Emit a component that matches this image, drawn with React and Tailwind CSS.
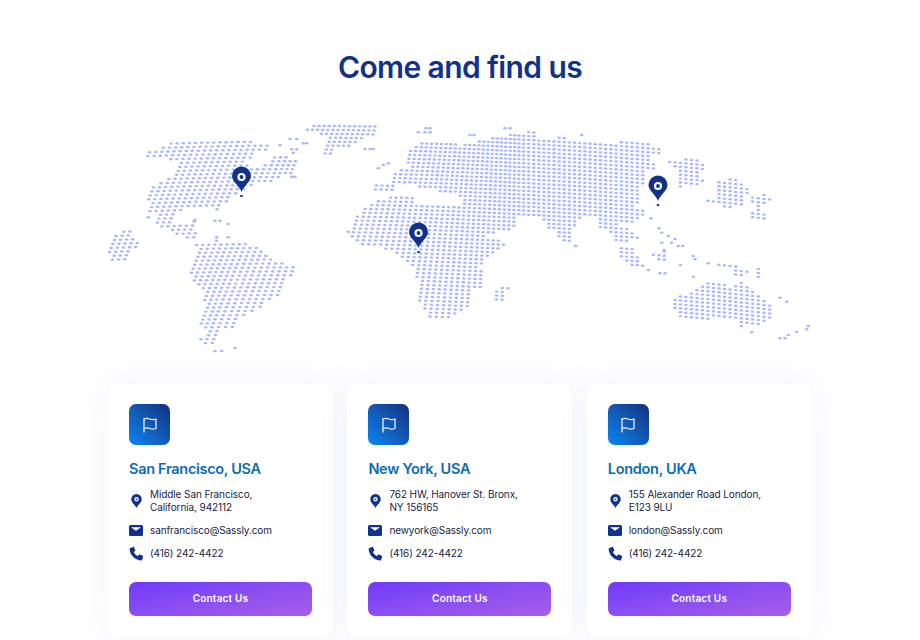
import { Fragment } from 'react'

// land outlines, traced from the picture. L = left half crop, R = right half crop
const L = (pts) => pts.map(([x, y]) => [100 + x / 3, 120 + y / 3])
const R = (pts) => pts.map(([x, y]) => [460 + x / 3, 120 + y / 3])

const land = [
  L([[128,120],[150,95],[215,65],[330,62],[400,62],[445,55],[465,58],[468,70],[520,65],[505,90],[462,100],[445,125],[460,140],[480,150],[520,110],[550,105],[580,115],[600,140],[585,155],[530,180],[470,195],[430,215],[395,235],[355,262],[350,275],[335,265],[250,270],[225,290],[215,310],[260,312],[285,300],[290,335],[280,365],[260,355],[225,340],[185,325],[160,312],[165,280],[140,272],[150,210],[175,185],[215,165],[235,125],[180,108],[130,122]]),
  L([[605,35],[640,13],[830,13],[830,38],[780,65],[750,80],[700,85],[690,105],[665,100],[668,75],[680,50],[640,38]]),
  L([[27,405],[38,342],[90,330],[115,365],[85,425],[30,428]]),
  L([[280,372],[350,360],[440,372],[490,385],[500,410],[530,425],[590,440],[590,462],[560,475],[545,500],[545,530],[490,550],[470,575],[420,595],[400,625],[360,620],[345,665],[365,662],[330,680],[300,660],[320,625],[295,620],[310,560],[320,510],[280,490],[265,445],[285,405],[300,385]]),
  [[405,153],[422,142],[450,142],[460,145],[478,142],[487,138],[498,138],[510,135],[520,132],[535,132],[535,137],[567,138],[575,142],[642,142],[657,146],[665,153],[650,155],[650,162],[660,167],[647,170],[643,185],[637,192],[643,198],[635,207],[645,208],[643,217],[633,222],[610,222],[627,228],[640,238],[627,242],[615,243],[610,230],[598,227],[597,218],[580,218],[575,227],[570,243],[562,242],[555,232],[548,227],[540,218],[517,217],[517,227],[503,232],[483,235],[505,242],[502,248],[493,255],[483,262],[478,267],[485,277],[485,287],[470,292],[470,302],[465,310],[453,318],[428,318],[423,308],[417,295],[417,267],[408,263],[385,248],[360,248],[352,237],[355,218],[370,203],[387,197],[412,197],[417,205],[433,205],[460,207],[460,195],[445,194],[433,190],[420,188],[410,183],[395,185],[392,190],[373,192],[377,183],[390,182],[390,175],[400,168],[408,167]],
  R([[620,125],[700,115],[745,140],[705,165],[745,190],[650,205],[645,150]]),
  R([[770,175],[830,180],[865,200],[860,225],[855,250],[810,265],[730,240],[760,235],[770,200]]),
  R([[870,225],[910,222],[945,245],[890,260],[870,250]]),
  R([[880,270],[905,270],[935,292],[885,305],[870,285]]),
  R([[480,380],[515,385],[550,440],[525,445],[480,410]]),
  R([[575,405],[615,390],[630,420],[590,430]]),
  R([[645,420],[675,440],[650,445]]),
  R([[765,430],[790,428],[830,440],[790,440]]),
  R([[800,450],[860,450],[880,465],[820,465]]),
  R([[880,450],[895,440],[915,452],[900,475],[880,470]]),
  R([[630,540],[680,520],[725,490],[790,480],[800,505],[840,480],[870,510],[905,525],[950,575],[925,600],[900,620],[840,620],[825,595],[700,600],[655,598]]),
  R([[105,510],[140,490],[145,510],[130,545],[110,545]]),
]

// stray dots that no outline catches
const strays = [
  ...L([[540,75],[570,57],[590,57],[610,70],[620,70],[575,88],[590,88],[580,98],[795,87],[810,87],[820,87],[575,170],[585,170],[345,302],[360,302],[385,312],[350,352],[385,352],[285,300],[345,693],[365,693],[405,684],[955,37],[975,37],[990,37],[978,25],[990,25],[835,145],[865,130],[850,135],[745,335],[145,292]]),
  ...R([[565,450],[600,460],[615,460],[597,325],[605,338],[625,348],[645,357],[605,368],[635,368],[655,378],[668,378],[612,390],[700,408],[705,418],[700,470],[745,430],[347,378],[573,295],[960,533],[980,545],[1045,618],[1040,628],[1010,635],[985,645],[960,655],[975,655],[875,637],[135,25],[150,25],[30,45],[42,45],[365,45]]),
]

function inside(x, y, poly) {
  let hit = false
  for (let i = 0, j = poly.length - 1; i < poly.length; j = i++) {
    const [xi, yi] = poly[i]
    const [xj, yj] = poly[j]
    if (yi > y !== yj > y && x < ((xj - xi) * (y - yi)) / (yj - yi) + xi) hit = !hit
  }
  return hit
}

// the dot grid is warped: wide slanted columns on the left, tighter upright ones in Asia
const pitchAt = (x) => (x < 350 ? 6.1 : x < 520 ? 6.1 - ((x - 350) / 170) * 1.1 : 5 + ((x - 520) / 280) * 0.8)
const slantAt = (x) => (x < 250 ? 1.6 : x < 520 ? 1.6 * (1 - (x - 250) / 270) : 0)

const dots = []
for (let row = 0; row < 62; row++) {
  let base = 90
  while (base < 860) {
    const x = base - (row - 30) * slantAt(base)
    const y = 118 + row * 3.93 + 0.00012 * (x - 300) * (x - 300)
    if (land.some((p) => inside(x, y, p))) dots.push([x, y])
    base += pitchAt(base)
  }
}
dots.push(...strays)

const pins = [
  [241.5, 168],
  [418.5, 224],
  [658, 177],
]

function WorldMap() {
  return (
    <svg viewBox="105 120 710 240" width="710" height="240" className="block">
      {dots.map(([x, y], i) => (
        <ellipse key={i} cx={x.toFixed(1)} cy={y.toFixed(1)} rx="1.8" ry="1.2" fill="#aab7fa" />
      ))}
      {pins.map(([x, y]) => (
        <Fragment key={x}>
          <path
            d={`M${x} ${y + 24}c-1-3-3-5-5.500-8.200-2-2.500-4-4.800-4-7.800a9.500 9.500 0 0 1 19 0c0 3-2 5.300-4 7.800-2.500 3.200-4.500 5.200-5.500 8.200z`}
            fill="#12328a"
          />
          <circle cx={x} cy={y + 9} r="3" fill="none" stroke="#fff" strokeWidth="2.200" />
          <ellipse cx={x} cy={y + 28} rx="1.600" ry="1.100" fill="#12328a" />
        </Fragment>
      ))}
    </svg>
  )
}

function PinIcon() {
  return (
    <svg viewBox="0 0 12 16" className="w-[11px] h-[14px]">
      <path
        fillRule="evenodd"
        d="M6 16C5 13 0 10 0 6a6 6 0 0 1 12 0c0 4-5 7-6 10zM6 3.500a2.500 2.500 0 1 0 0 5 2.500 2.500 0 0 0 0-5z"
        fill="#12328a"
      />
      <circle cx="6" cy="6" r="1" fill="#12328a" />
    </svg>
  )
}

function MailIcon() {
  return (
    <svg viewBox="0 0 14 11" className="w-[14px] h-[11px]">
      <rect width="14" height="11" rx="1.500" fill="#12328a" />
      <path d="M2 2.200h10L7 5.800z" fill="#fff" />
    </svg>
  )
}

function PhoneIcon() {
  return (
    <svg viewBox="0 0 24 24" className="w-[15px] h-[15px]">
      <path
        d="M6.600 1.500 3 2.600C1.800 3 1 4 1 5.300 1.500 14.500 9.500 22.500 18.700 23c1.300 0 2.400-.8 2.700-2l1.100-3.600c.2-.7-.1-1.400-.7-1.700l-4.300-2c-.6-.3-1.300-.1-1.700.4l-1.700 2.100c-2.900-1.400-5.200-3.700-6.500-6.600l2.100-1.700c.5-.4.700-1.100.4-1.700l-2-4.300c-.3-.6-.9-.6-1.500-.4z"
        fill="#12328a"
      />
    </svg>
  )
}

function FlagIcon() {
  return (
    <svg viewBox="0 0 16 16" className="w-[16px] h-[16px]" fill="none" stroke="#e8f0ff" strokeWidth="1.300" strokeLinecap="round" strokeLinejoin="round">
      <path d="M2 15V2" />
      <path d="M2 2c2.200-1 4-.9 6 0s3.800.9 6 0v9.500c-2.200.9-4 .9-6 0s-3.800-.9-6 0" />
    </svg>
  )
}

const offices = [
  { city: 'San Francisco, USA', lines: ['Middle San Francisco,', 'California, 942112'], email: 'sanfrancisco@Sassly.com' },
  { city: 'New York, USA', lines: ['762 HW, Hanover St. Bronx,', 'NY 156165'], email: 'newyork@Sassly.com' },
  { city: 'London, UKA', lines: ['155 Alexander Road London,', 'E123 9LU'], email: 'london@Sassly.com' },
]

function OfficeCard({ office }) {
  return (
    <div className="w-[225px] h-[253px] rounded-[10px] bg-white px-[21px] pt-[20px] shadow-[0_0_40px_rgba(90,100,230,0.07)]">
      <div className="w-[41px] h-[41px] rounded-[7px] flex items-center justify-center bg-gradient-to-tr from-[#0487f0] to-[#12307f]">
        <FlagIcon />
      </div>
      <h3 className="mt-[14px] text-[14.500px] leading-[20px] font-semibold tracking-[-0.3px] text-[#0a6cb4]">{office.city}</h3>
      <div className="mt-[8.500px] flex items-center">
        <div className="w-[21px] flex-none flex pl-[2px]"><PinIcon /></div>
        <p className="text-[10px] leading-[13.500px] tracking-[-0.1px] text-[#1a2346]">
          {office.lines[0]}
          <br />
          {office.lines[1]}
        </p>
      </div>
      <div className="mt-[8.500px] flex items-center h-[14px]">
        <div className="w-[21px] flex-none flex"><MailIcon /></div>
        <p className="text-[10px] leading-[14px] tracking-[-0.1px] text-[#1a2346]">{office.email}</p>
      </div>
      <div className="mt-[9px] flex items-center h-[14px]">
        <div className="w-[21px] flex-none flex"><PhoneIcon /></div>
        <p className="text-[10px] leading-[14px] tracking-[-0.1px] text-[#1a2346]">(416) 242-4422</p>
      </div>
      <button className="mt-[21.500px] w-full h-[34px] rounded-[7px] bg-gradient-to-br from-[#7038fb] to-[#a85de6] text-white text-[10px] font-semibold tracking-[0.2px]">
        Contact Us
      </button>
    </div>
  )
}

export default function App() {
  return (
    <div className="w-[920px] h-[640px] overflow-hidden bg-white font-['Inter','Liberation_Sans',sans-serif]">
      <h1 className="pt-[47px] text-center text-[30px] leading-[40px] font-semibold tracking-[-0.6px] text-[#12328a]">
        Come and find us
      </h1>
      <div className="mt-[33px] ml-[105px]">
        <WorldMap />
      </div>
      <div className="mt-[24px] ml-[108px] flex gap-[14.400px]">
        {offices.map((o) => (
          <OfficeCard key={o.city} office={o} />
        ))}
      </div>
    </div>
  )
}
